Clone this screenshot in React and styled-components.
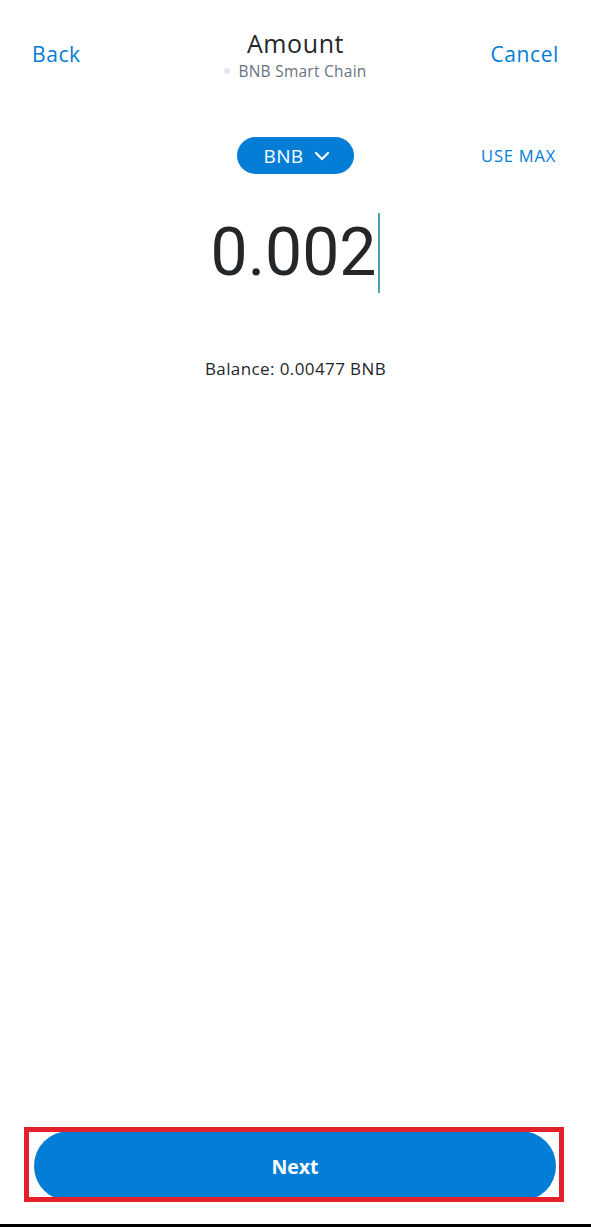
import React from "react";
import styled, { createGlobalStyle } from "styled-components";

const Global = createGlobalStyle`
  html, body { margin: 0; padding: 0; background: #fff; }
  body { font-family: "Open Sans", "Noto Sans", sans-serif; }
`;

const Page = styled.div`
  width: 591px;
  height: 1227px;
  display: flex;
  flex-direction: column;
  background: #fff;
  box-sizing: border-box;
`;

const Header = styled.div`
  display: grid;
  grid-template-columns: 1fr auto 1fr;
  align-items: start;
  padding: 28px 32px 0 32px;
  height: 68px;
`;

const NavLink = styled.span`
  color: #037dd6;
  font-size: 21px;
  letter-spacing: 0.6px;
  margin-top: 12px;
  justify-self: ${(p) => (p.$right ? "end" : "start")};
`;

const TitleBox = styled.div`
  display: flex;
  flex-direction: column;
  align-items: center;
`;

const Title = styled.div`
  font-size: 25px;
  letter-spacing: 0.6px;
  color: #24272a;
  line-height: 31px;
`;

const Network = styled.div`
  display: flex;
  align-items: center;
  gap: 8px;
  font-size: 15.5px;
  letter-spacing: 0.25px;
  color: #6a737d;
  margin-top: 1px;
`;

const Dot = styled.span`
  width: 6px;
  height: 6px;
  border-radius: 50%;
  background: #e6e6e6;
`;

const TokenRow = styled.div`
  display: grid;
  grid-template-columns: 1fr auto 1fr;
  align-items: center;
  padding: 41px 35px 0 35px;
`;

const TokenPill = styled.div`
  grid-column: 2;
  display: flex;
  align-items: center;
  justify-content: center;
  gap: 10px;
  width: 117px;
  height: 37px;
  border-radius: 19px;
  background: #037dd6;
  color: #fff;
  font-size: 19px;
  letter-spacing: 0.4px;
  box-sizing: border-box;
  padding-left: 2px;
`;

const UseMax = styled.span`
  grid-column: 3;
  justify-self: end;
  color: #037dd6;
  font-size: 16.5px;
  letter-spacing: 0.8px;
`;

const AmountRow = styled.div`
  display: flex;
  justify-content: center;
  align-items: center;
  margin-top: 38px;
  height: 82px;
`;

const AmountText = styled.span`
  font-family: "Roboto", sans-serif;
  font-size: 66px;
  color: #24272a;
  line-height: 1;
`;

const Caret = styled.span`
  width: 2px;
  height: 80px;
  background: #4aa3a8;
  margin-left: 2px;
`;

const Balance = styled.div`
  text-align: center;
  margin-top: 63px;
  font-size: 17px;
  letter-spacing: 0.4px;
  color: #24272a;
`;

const Spacer = styled.div`
  flex: 1;
`;

const Highlight = styled.div`
  margin: 0 27px 22px 24px;
  height: 75px;
  position: relative;
`;

const NextButton = styled.button`
  position: absolute;
  left: 10px;
  right: 8px;
  top: 4px;
  height: 70px;
  border: none;
  border-radius: 35px;
  background: #037dd6;
  color: #fff;
  font-family: "Open Sans", sans-serif;
  font-weight: 700;
  font-size: 19.5px;
`;

const Frame = styled.div`
  position: absolute;
  inset: 0;
  border: 5px solid #e3202b;
  pointer-events: none;
`;

const BottomBar = styled.div`
  height: 3px;
  background: #000;
`;

export default function App() {
  return (
    <Page>
      <Global />
      <Header>
        <NavLink>Back</NavLink>
        <TitleBox>
          <Title>Amount</Title>
          <Network>
            <Dot />
            BNB Smart Chain
          </Network>
        </TitleBox>
        <NavLink $right>Cancel</NavLink>
      </Header>
      <TokenRow>
        <TokenPill>
          BNB
          <svg width="16" height="10" viewBox="0 0 16 10" fill="none">
            <path d="M2 2l6 6 6-6" stroke="#fff" strokeWidth="2.2" strokeLinecap="round" strokeLinejoin="round" />
          </svg>
        </TokenPill>
        <UseMax>USE MAX</UseMax>
      </TokenRow>
      <AmountRow>
        <AmountText>0.002</AmountText>
        <Caret />
      </AmountRow>
      <Balance>Balance: 0.00477 BNB</Balance>
      <Spacer />
      <Highlight>
        <NextButton>Next</NextButton>
        <Frame />
      </Highlight>
      <BottomBar />
    </Page>
  );
}
